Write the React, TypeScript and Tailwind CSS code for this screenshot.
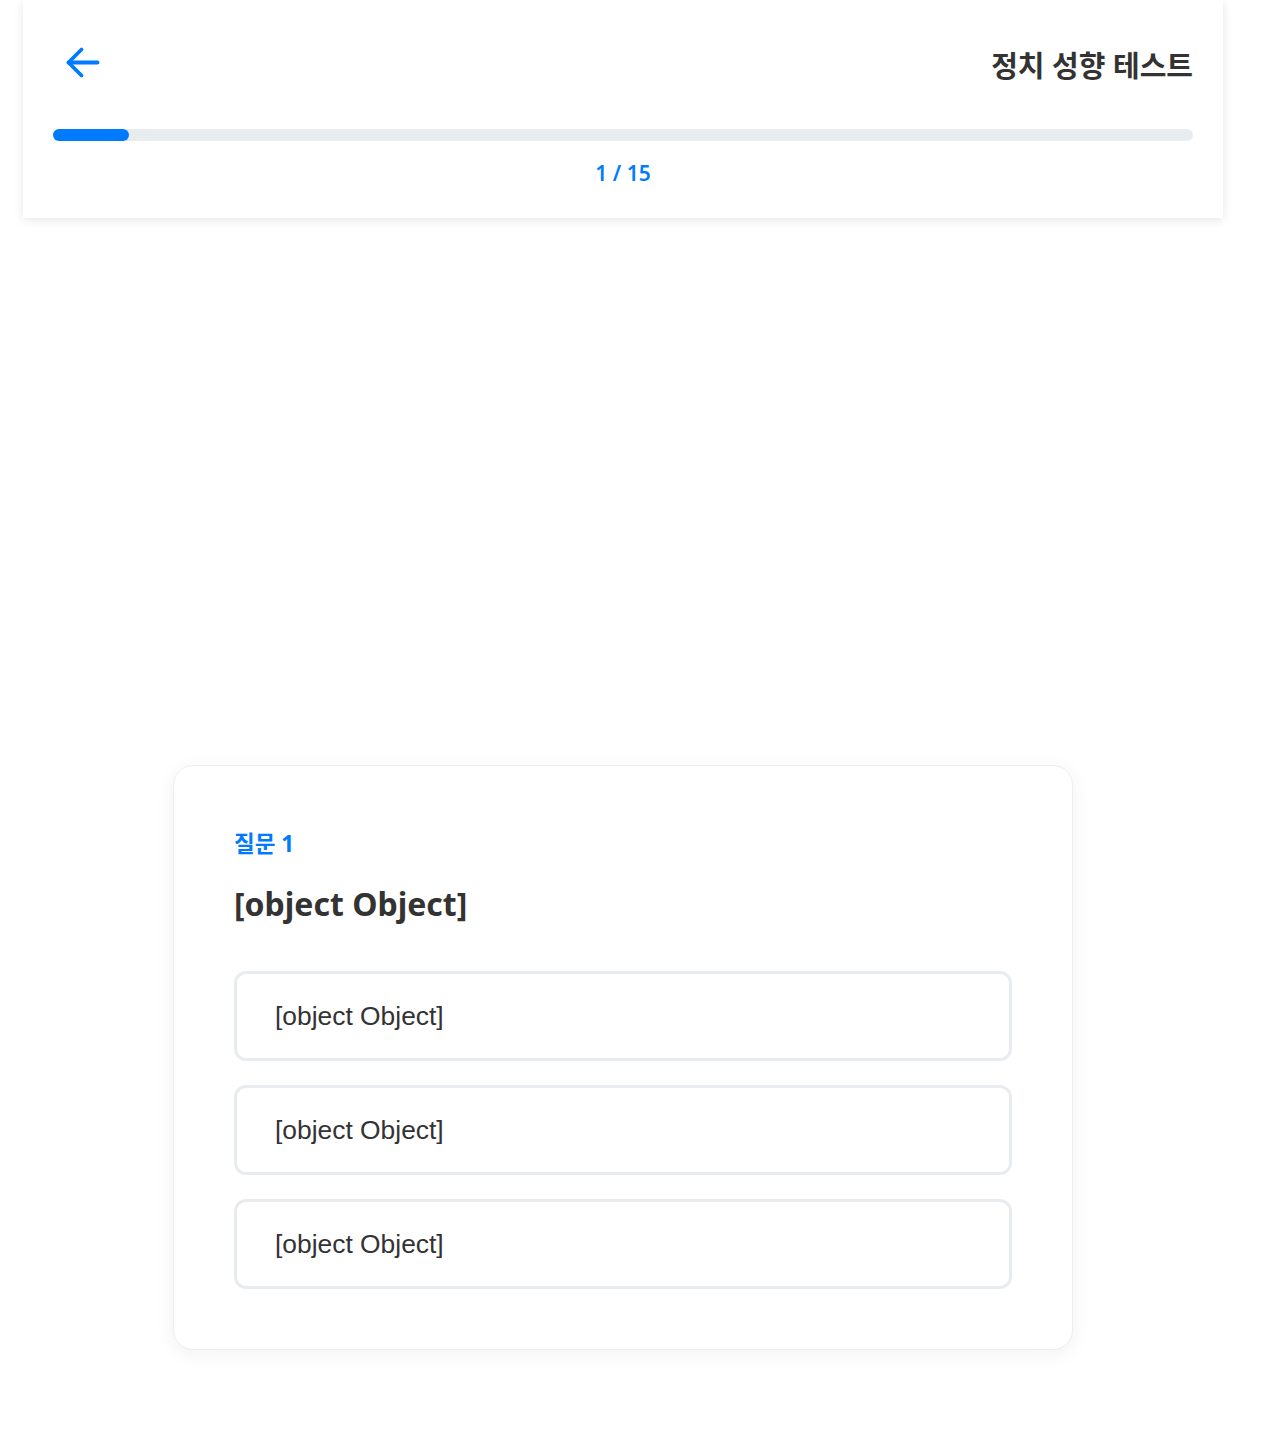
const FONT = { fontFamily: '"Noto Sans", "Noto Sans CJK KR", sans-serif' };

const OPTIONS = ['[object Object]', '[object Object]', '[object Object]'];

function BackArrow() {
  return (
    <svg width="36" height="33" viewBox="0 0 36 33" fill="none" stroke="#007bff" strokeWidth="3.8" strokeLinecap="round" strokeLinejoin="round">
      <path d="M32.5 16.5H3.5" />
      <path d="M16.5 3.5 3.5 16.5 16.5 29.5" />
    </svg>
  );
}

export default function App() {
  const current = 1;
  const total = 15;

  return (
    <div className="w-[1246px] bg-white text-[#333]" style={FONT}>
      {/* 헤더 */}
      <header className="mx-auto w-[1200px] bg-white px-[30px] pt-[30px] pb-[30px] shadow-[0_2px_10px_rgba(0,0,0,0.1)]">
        <div className="flex h-[68px] items-center justify-between">
          <button className="ml-[12px] mb-[4px] flex items-center">
            <BackArrow />
          </button>
          <h1 className="text-[29px] font-bold leading-none mt-[2px] text-[#333]">정치 성향 테스트</h1>
        </div>
        <div className="mt-[31px] h-3 w-full rounded-full bg-[#e9ecef]">
          <div className="h-3 rounded-full bg-[#007bff]" style={{ width: `${(current / total) * 100}%` }} />
        </div>
        <p className="mt-[17px] text-center text-[21px] leading-[30px] font-semibold text-[#007bff]">
          {current} / {total}
        </p>
      </header>

      {/* 질문 카드 */}
      <main className="pt-[547px] pb-[82px]">
        <div className="mx-auto w-[900px] rounded-[20px] border border-[#eeeeee] bg-white p-[60px] shadow-[0_4px_20px_rgba(0,0,0,0.06)]">
          <p className="text-[22.5px] leading-[36px] font-bold text-[#007bff]">질문 {current}</p>
          <h2 className="mt-[20px] mb-[45px] text-[32px] leading-[44px] font-bold text-[#333]">[object Object]</h2>
          <div className="flex flex-col gap-[24px]">
            {OPTIONS.map((opt, i) => (
              <button
                key={i}
                className="w-full rounded-[12px] border-[3px] border-[#e9ecef] bg-white pl-[38px] pr-[36px] py-[24px] text-left text-[26.4px] leading-[36px] text-[#333]"
                style={{ fontFamily: '"Liberation Sans", Arial, sans-serif' }}
              >
                {opt}
              </button>
            ))}
          </div>
        </div>
      </main>
    </div>
  );
}
